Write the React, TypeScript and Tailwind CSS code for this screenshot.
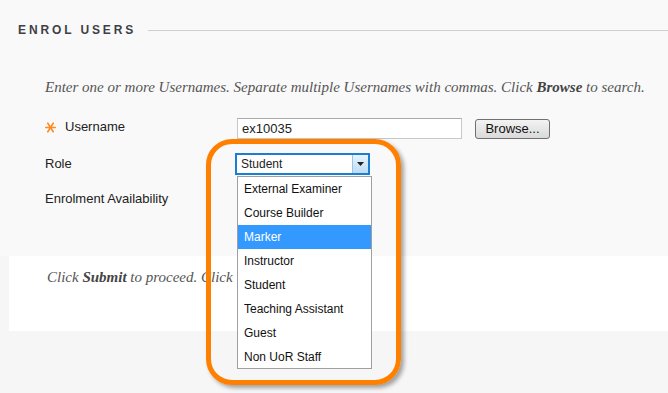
import React from "react";

const roles = [
  "External Examiner",
  "Course Builder",
  "Marker",
  "Instructor",
  "Student",
  "Teaching Assistant",
  "Guest",
  "Non UoR Staff",
];

const App = () => {
  return (
    <div className="relative h-[393px] w-[668px] overflow-hidden bg-[#f6f6f6] font-['Liberation_Sans',Arial,sans-serif]">
      <div className="bg-[#f9f9f9] pb-[13px]">
        {/* Section heading */}
        <div className="flex items-center pl-[18px] pt-[22px]">
          <h2 className="text-[12px] font-bold leading-[16px] tracking-[0.24em] text-[#3f3f46]">ENROL USERS</h2>
          <div className="ml-[12px] h-px flex-1 bg-[#cfcfcf]" />
        </div>

        <p className="mt-[40px] pl-[45px] font-['Liberation_Serif',Georgia,serif] text-[15px] italic leading-[18px] text-[#555]">
          Enter one or more Usernames. Separate multiple Usernames with commas. Click <b className="text-[#444]">Browse</b> to search.
        </p>

        {/* Form rows */}
        <div className="mt-[22px] flex flex-col gap-[14px] pl-[45px] text-[13px] text-[#222]">
          <div className="flex h-[21px] items-center">
            <div className="flex w-[192px] items-center pb-[3px]">
              <svg width="11" height="11" viewBox="0 0 11 11" className="mr-[9px]">
                <g stroke="#ff8a1f" strokeWidth="1.6" strokeLinecap="round">
                  <path d="M0.8 5.5H10.2" />
                  <path d="M2.8 1.2L8.2 9.8" />
                  <path d="M8.2 1.2L2.8 9.8" />
                </g>
              </svg>
              <span>Username</span>
            </div>
            <div className="flex h-[21px] w-[225px] items-center border border-[#c8c8c8] border-t-[#aaa] bg-white pl-[4px]">ex10035</div>
            <button className="ml-[13px] h-[20px] w-[75px] rounded-[3px] border border-[#707070] bg-gradient-to-b from-[#f3f3f3] to-[#dadada] text-[13px] leading-none text-[#111]">
              Browse...
            </button>
          </div>

          <div className="flex h-[22px] items-center">
            <div className="w-[190px]">Role</div>
            <div className="flex h-[22px] w-[135px] items-center border-2 border-[#1a7fd0] bg-white">
              <span className="flex-1 pl-[4px] text-[12px]">Student</span>
              <span className="flex h-[18px] w-[16px] items-center justify-center border-l border-[#9cc4e4] bg-gradient-to-b from-[#e8f4fd] to-[#bcdcf4]">
                <svg width="7" height="4" viewBox="0 0 7 4">
                  <path d="M0 0H7L3.5 4Z" fill="#222" />
                </svg>
              </span>
            </div>
          </div>

          <div className="flex h-[20px] items-center">
            <div className="w-[192px]">Enrolment Availability</div>
          </div>
        </div>
        <div className="h-[34px]" />
      </div>

      {/* Submit instructions panel */}
      <div className="ml-[9px] flex h-[75px] items-start bg-white pl-[38px] pt-[12px]">
        <p className="font-['Liberation_Serif',Georgia,serif] text-[15px] italic leading-[18px] text-[#555]">
          Click <b className="text-[#444]">Submit</b> to proceed. Click
        </p>
      </div>

      {/* Open dropdown list */}
      <ul className="absolute left-[237px] top-[176px] h-[193px] w-[135px] border border-[#a0a0a0] bg-white text-[12px] text-[#111]">
        {roles.map((r) => (
          <li
            key={r}
            className={`flex h-[24px] items-center pl-[6px] ${r === "Marker" ? "bg-[#3399ff] text-white" : ""}`}
          >
            {r}
          </li>
        ))}
      </ul>

      {/* Orange highlight callout */}
      <div className="pointer-events-none absolute left-[206px] top-[139px] h-[246px] w-[195px] rounded-[26px] border-[5px] border-[#ff8000] shadow-[3px_3px_4px_rgba(0,0,0,0.35)]" />
    </div>
  );
};

export default App;
